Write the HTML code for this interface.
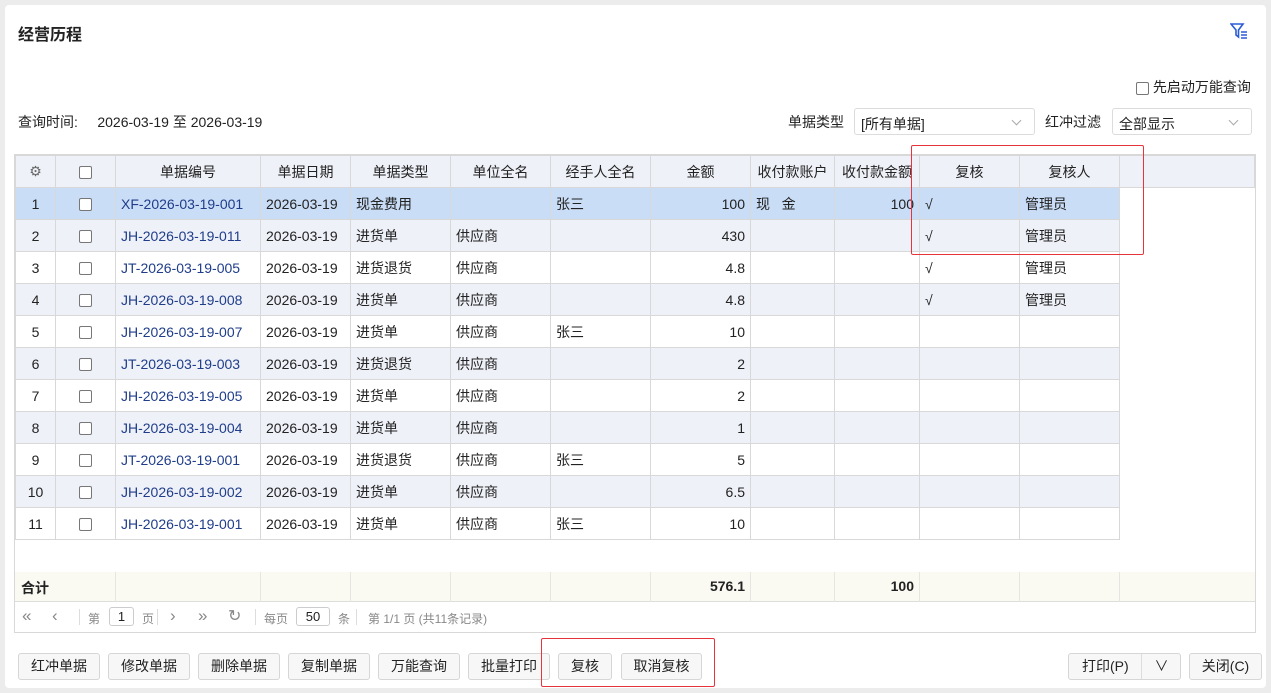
<!DOCTYPE html>
<html><head><meta charset="utf-8"><style>
*{box-sizing:border-box;margin:0;padding:0}
body{width:1271px;height:693px;background:#ececec;font-family:"Liberation Sans","Noto Sans CJK SC",sans-serif;font-size:14px;color:#222;position:relative;overflow:hidden}
.panel{position:absolute;left:5px;top:5px;width:1261px;height:683px;background:#fff;border-radius:4px}
.a{position:absolute;white-space:nowrap}
.sel{position:absolute;height:27px;border:1px solid #dcdcdc;border-radius:3px;background:#fff;padding:5px 6px;font-size:14px}
.sel:after{content:"";position:absolute;right:14px;top:8px;width:6px;height:6px;border-right:1px solid #aaa;border-bottom:1px solid #aaa;transform:rotate(45deg)}
.grid{position:absolute;left:14px;top:154px;width:1242px;height:479px;border:1px solid #d8d8d8;background:#fff}
table{border-collapse:collapse;table-layout:fixed;width:1240px}
td,th{height:32px;border:1px solid #d8d8d8;padding:0 5px;white-space:nowrap;overflow:hidden;font-weight:normal}
th{background:#eef1f8;height:32px;text-align:center}
tr.e td{background:#eef1f8}
tr.s td{background:#c9ddf6}
td.c{text-align:center}td.r{text-align:right}td.l{color:#1f3d8a}
.cb{display:inline-block;width:13px;height:13px;border:1px solid #777;border-radius:2px;background:#fff;vertical-align:middle}
td.x,th.x{border:none;background:#fff!important}
.btn{position:absolute;top:653px;height:27px;border:1px solid #d6d6d6;border-radius:3px;background:#f7f7f7;font-size:14px;text-align:center;line-height:25px}
.red{position:absolute;border:1.5px solid #e8323c;border-radius:2px}
.pg{position:absolute;top:610px;font-size:12px;color:#888}
.vl{position:absolute;top:572px;height:30px;border-left:1px solid #e6e6e0}
.ps{position:absolute;top:609px;height:16px;border-left:1px solid #ddd}
</style></head><body>
<div class="panel"></div>
<div class="a" style="left:18px;top:21px;font-size:16px;font-weight:bold">经营历程</div>
<svg class="a" style="left:1230px;top:23px" width="18" height="16" viewBox="0 0 18 16"><path d="M1 1H13L8.5 7V14L6 12V7Z" fill="none" stroke="#2a5bd7" stroke-width="1.6"/><path d="M11 9h6M11 12h6M11 15h6" stroke="#2a5bd7" stroke-width="1.4"/></svg>
<div class="a" style="left:1136px;top:77px"><span class="cb"></span> 先启动万能查询</div>
<div class="a" style="left:18px;top:112px">查询时间:&nbsp;&nbsp;&nbsp;&nbsp; 2026-03-19 至 2026-03-19</div>
<div class="a" style="left:788px;top:112px">单据类型</div>
<div class="sel" style="left:854px;top:108px;width:181px">[所有单据]</div>
<div class="a" style="left:1045px;top:112px">红冲过滤</div>
<div class="sel" style="left:1112px;top:108px;width:140px">全部显示</div>
<div class="grid">
<table>
<colgroup><col style="width:40px"><col style="width:60px"><col style="width:145px"><col style="width:90px"><col style="width:100px"><col style="width:100px"><col style="width:100px"><col style="width:100px"><col style="width:84px"><col style="width:85px"><col style="width:100px"><col style="width:100px"><col></colgroup>
<tr><th style="color:#666">⚙</th><th><span class="cb"></span></th><th>单据编号</th><th>单据日期</th><th>单据类型</th><th>单位全名</th><th>经手人全名</th><th>金额</th><th>收付款账户</th><th>收付款金额</th><th>复核</th><th>复核人</th><th></th></tr>
<tr class="s"><td class="c">1</td><td class="c"><span class="cb"></span></td><td class="l">XF-2026-03-19-001</td><td>2026-03-19</td><td>现金费用</td><td></td><td>张三</td><td class="r">100</td><td>现&nbsp;&nbsp;&nbsp;金</td><td class="r">100</td><td>√</td><td>管理员</td><td class="x"></td></tr>
<tr class="e"><td class="c">2</td><td class="c"><span class="cb"></span></td><td class="l">JH-2026-03-19-011</td><td>2026-03-19</td><td>进货单</td><td>供应商</td><td></td><td class="r">430</td><td></td><td></td><td>√</td><td>管理员</td><td class="x"></td></tr>
<tr><td class="c">3</td><td class="c"><span class="cb"></span></td><td class="l">JT-2026-03-19-005</td><td>2026-03-19</td><td>进货退货</td><td>供应商</td><td></td><td class="r">4.8</td><td></td><td></td><td>√</td><td>管理员</td><td class="x"></td></tr>
<tr class="e"><td class="c">4</td><td class="c"><span class="cb"></span></td><td class="l">JH-2026-03-19-008</td><td>2026-03-19</td><td>进货单</td><td>供应商</td><td></td><td class="r">4.8</td><td></td><td></td><td>√</td><td>管理员</td><td class="x"></td></tr>
<tr><td class="c">5</td><td class="c"><span class="cb"></span></td><td class="l">JH-2026-03-19-007</td><td>2026-03-19</td><td>进货单</td><td>供应商</td><td>张三</td><td class="r">10</td><td></td><td></td><td></td><td></td><td class="x"></td></tr>
<tr class="e"><td class="c">6</td><td class="c"><span class="cb"></span></td><td class="l">JT-2026-03-19-003</td><td>2026-03-19</td><td>进货退货</td><td>供应商</td><td></td><td class="r">2</td><td></td><td></td><td></td><td></td><td class="x"></td></tr>
<tr><td class="c">7</td><td class="c"><span class="cb"></span></td><td class="l">JH-2026-03-19-005</td><td>2026-03-19</td><td>进货单</td><td>供应商</td><td></td><td class="r">2</td><td></td><td></td><td></td><td></td><td class="x"></td></tr>
<tr class="e"><td class="c">8</td><td class="c"><span class="cb"></span></td><td class="l">JH-2026-03-19-004</td><td>2026-03-19</td><td>进货单</td><td>供应商</td><td></td><td class="r">1</td><td></td><td></td><td></td><td></td><td class="x"></td></tr>
<tr><td class="c">9</td><td class="c"><span class="cb"></span></td><td class="l">JT-2026-03-19-001</td><td>2026-03-19</td><td>进货退货</td><td>供应商</td><td>张三</td><td class="r">5</td><td></td><td></td><td></td><td></td><td class="x"></td></tr>
<tr class="e"><td class="c">10</td><td class="c"><span class="cb"></span></td><td class="l">JH-2026-03-19-002</td><td>2026-03-19</td><td>进货单</td><td>供应商</td><td></td><td class="r">6.5</td><td></td><td></td><td></td><td></td><td class="x"></td></tr>
<tr><td class="c">11</td><td class="c"><span class="cb"></span></td><td class="l">JH-2026-03-19-001</td><td>2026-03-19</td><td>进货单</td><td>供应商</td><td>张三</td><td class="r">10</td><td></td><td></td><td></td><td></td><td class="x"></td></tr>
</table>
<div class="a" style="left:0;top:417px;width:1240px;height:30px;background:#fafaf3;border-bottom:1px solid #ddd"></div>
<div class="a" style="left:6px;top:423px;font-weight:bold">合计</div>
<div class="a" style="left:634px;top:423px;width:96px;text-align:right;font-weight:bold">576.1</div>
<div class="a" style="left:818px;top:423px;width:81px;text-align:right;font-weight:bold">100</div>
</div>
<div class="vl" style="left:115px"></div><div class="vl" style="left:260px"></div><div class="vl" style="left:350px"></div><div class="vl" style="left:450px"></div><div class="vl" style="left:550px"></div><div class="vl" style="left:650px"></div><div class="vl" style="left:750px"></div><div class="vl" style="left:834px"></div><div class="vl" style="left:919px"></div><div class="vl" style="left:1019px"></div><div class="vl" style="left:1119px"></div>
<div class="pg" style="left:22px;top:606px;font-size:17px">«</div>
<div class="pg" style="left:52px;top:606px;font-size:17px">‹</div>
<div class="ps" style="left:79px"></div>
<div class="pg" style="left:88px">第</div>
<div class="a" style="left:109px;top:607px;width:25px;height:19px;border:1px solid #ccc;border-radius:3px;text-align:center;font-size:13px;line-height:17px">1</div>
<div class="pg" style="left:142px">页</div>
<div class="ps" style="left:157px"></div>
<div class="pg" style="left:170px;top:606px;font-size:17px">›</div>
<div class="pg" style="left:198px;top:606px;font-size:17px">»</div>
<div class="pg" style="left:228px;top:606px;font-size:16px">↻</div>
<div class="ps" style="left:255px"></div>
<div class="pg" style="left:264px">每页</div>
<div class="a" style="left:296px;top:607px;width:34px;height:19px;border:1px solid #ccc;border-radius:3px;text-align:center;font-size:13px;line-height:17px">50</div>
<div class="pg" style="left:338px">条</div>
<div class="ps" style="left:356px"></div>
<div class="pg" style="left:368px">第 1/1 页 (共11条记录)</div>
<div class="btn" style="left:18px;width:82px">红冲单据</div>
<div class="btn" style="left:108px;width:82px">修改单据</div>
<div class="btn" style="left:198px;width:82px">删除单据</div>
<div class="btn" style="left:288px;width:82px">复制单据</div>
<div class="btn" style="left:378px;width:82px">万能查询</div>
<div class="btn" style="left:468px;width:82px">批量打印</div>
<div class="btn" style="left:558px;width:54px">复核</div>
<div class="btn" style="left:621px;width:81px">取消复核</div>
<div class="btn" style="left:1068px;width:113px;text-align:left;padding-left:13px">打印(P)<span style="position:absolute;left:72px;top:0;height:25px;border-left:1px solid #ddd;width:40px;text-align:center">∨</span></div>
<div class="btn" style="left:1189px;width:73px">关闭(C)</div>
<div class="red" style="left:911px;top:145px;width:233px;height:110px"></div>
<div class="red" style="left:541px;top:638px;width:174px;height:49px"></div>
</body></html>
